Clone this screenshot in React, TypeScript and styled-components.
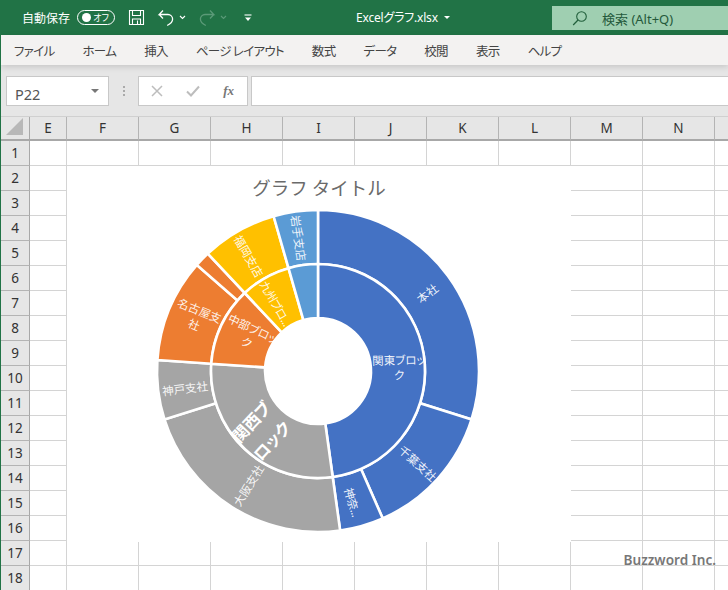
import React from "react";
import styled, { createGlobalStyle } from "styled-components";

const FONT = `"Noto Sans CJK JP", "Noto Sans", sans-serif`;
const UI_FONT = `"Noto Sans", "Noto Sans CJK JP", sans-serif`;

const GlobalStyle = createGlobalStyle`
  html, body {
    margin: 0;
    padding: 0;
    background: #fff;
    overflow: hidden;
  }
`;

const MENU = ["ファイル", "ホーム", "挿入", "ページ レイアウト", "数式", "データ", "校閲", "表示", "ヘルプ"];
const COLUMNS = ["E", "F", "G", "H", "I", "J", "K", "L", "M", "N", ""];
const ROWS = Array.from({ length: 18 }, (_, i) => i + 1);

const CX = 251;
const CY = 163;
const R_OUT = 161;
const R_MID = 107;
const R_IN = 53;

const BLUE = "#4472c4";
const ORANGE = "#ed7d31";
const GRAY = "#a5a5a5";
const YELLOW = "#ffc000";
const SKY = "#5b9bd5";

interface ISegment {
  from: number;
  to: number;
  color: string;
}

const OUTER: ISegment[] = [
  { from: 0, to: 107.5, color: BLUE },
  { from: 107.5, to: 156.3, color: BLUE },
  { from: 156.3, to: 172.1, color: BLUE },
  { from: 172.1, to: 252.5, color: GRAY },
  { from: 252.5, to: 273.9, color: GRAY },
  { from: 273.9, to: 311.2, color: ORANGE },
  { from: 311.2, to: 316.8, color: ORANGE },
  { from: 316.8, to: 344, color: YELLOW },
  { from: 344, to: 360, color: SKY },
];

const INNER: ISegment[] = [
  { from: 0, to: 172.1, color: BLUE },
  { from: 172.1, to: 273.9, color: GRAY },
  { from: 273.9, to: 316.8, color: ORANGE },
  { from: 316.8, to: 344, color: YELLOW },
  { from: 344, to: 360, color: SKY },
];

interface ILabel {
  lines: string[];
  x: number;
  y: number;
  rotate: number;
  large?: boolean;
  tight?: boolean;
}

// x, y are page coordinates of the label centre
const LABELS: ILabel[] = [
  { lines: ["本社"], x: 427, y: 293, rotate: -37 },
  { lines: ["千葉支社"], x: 418, y: 463, rotate: 42 },
  { lines: ["神奈..."], x: 353, y: 502, rotate: 74, tight: true },
  { lines: ["大阪支社"], x: 248, y: 485, rotate: -58 },
  { lines: ["神戸支社"], x: 185, y: 388, rotate: -7 },
  { lines: ["名古屋支", "社"], x: 197, y: 317, rotate: 22 },
  { lines: ["福岡支店"], x: 249, y: 256, rotate: 60 },
  { lines: ["岩手支店"], x: 299, y: 238, rotate: 82 },
  { lines: ["関東ブロッ", "ク"], x: 399, y: 367, rotate: -1 },
  { lines: ["関西ブ", "ロック"], x: 261, y: 431, rotate: -47, large: true },
  { lines: ["中部ブロッ", "ク"], x: 250, y: 335, rotate: 25 },
  { lines: ["九州ブロ..."], x: 276, y: 303, rotate: 60, tight: true },
];

const polar = (radius: number, angle: number) => {
  const rad = (angle * Math.PI) / 180;
  return [CX + radius * Math.sin(rad), CY - radius * Math.cos(rad)];
};

const arcPath = (r0: number, r1: number, from: number, to: number) => {
  const end = Math.min(to, from + 359.99);
  const large = end - from > 180 ? 1 : 0;
  const [ax, ay] = polar(r1, from);
  const [bx, by] = polar(r1, end);
  const [cx, cy] = polar(r0, end);
  const [dx, dy] = polar(r0, from);
  return `M${ax} ${ay}A${r1} ${r1} 0 ${large} 1 ${bx} ${by}L${cx} ${cy}A${r0} ${r0} 0 ${large} 0 ${dx} ${dy}Z`;
};

const Sunburst = () => (
  <ChartSvg viewBox="0 0 504 334">
    {OUTER.map((s) => (
      <Slice key={`o${s.from}`} d={arcPath(R_MID, R_OUT, s.from, s.to)} fill={s.color} />
    ))}
    {INNER.map((s) => (
      <Slice key={`i${s.from}`} d={arcPath(R_IN, R_MID, s.from, s.to)} fill={s.color} />
    ))}
    {LABELS.map((label) => {
      const lineHeight = label.large ? 28 : 15;
      const startY = (-(label.lines.length - 1) * lineHeight) / 2;
      return (
        <g
          key={label.lines[0]}
          transform={`translate(${label.x - 67} ${label.y - 208}) rotate(${label.rotate})`}
        >
          {label.lines.map((line, i) => (
            <SliceText
              key={line}
              $large={label.large}
              $tight={label.tight}
              x={0}
              y={startY + i * lineHeight}
            >
              {line}
            </SliceText>
          ))}
        </g>
      );
    })}
  </ChartSvg>
);

const App = () => (
  <>
    <GlobalStyle />
    <Page>
      <TitleBar>
        <AutoSave>自動保存</AutoSave>
        <Toggle>
          <ToggleKnob />
          <ToggleText>オフ</ToggleText>
        </Toggle>
        <QatIcon width="17" height="17" viewBox="0 0 17 17" $left={13}>
          <path d="M1.5 1.5h14v14h-14z M4.5 1.5v5h8v-5 M4.5 15.5v-5.5h8v5.5 M9.5 11.5v4" fill="none" stroke="#fff" strokeWidth="1.1" />
        </QatIcon>
        <QatIcon width="18" height="18" viewBox="0 0 18 18" $left={12}>
          <path d="M6 1.5L2.2 5.5H11a4.6 4.6 0 0 1 4.6 4.6c0 3-2.3 5-5.4 6.4 M2.2 5.5L6 9.5" fill="none" stroke="#fff" strokeWidth="1.3" />
        </QatIcon>
        <QatIcon width="7" height="5" viewBox="0 0 7 5" $left={4}>
          <path d="M1 1l2.5 2.5L6 1" fill="none" stroke="#fff" strokeWidth="1.1" />
        </QatIcon>
        <QatIcon width="18" height="18" viewBox="0 0 18 18" $left={12}>
          <path d="M12 1.5L15.8 5.5H7a4.6 4.6 0 0 0-4.6 4.6c0 3 2.3 5 5.4 6.4 M15.8 5.5L12 9.5" fill="none" stroke="#5b9a78" strokeWidth="1.3" />
        </QatIcon>
        <QatIcon width="7" height="5" viewBox="0 0 7 5" $left={4}>
          <path d="M1 1l2.5 2.5L6 1" fill="none" stroke="#5b9a78" strokeWidth="1.1" />
        </QatIcon>
        <QatIcon width="8" height="8" viewBox="0 0 8 8" $left={17}>
          <path d="M0.5 1h7" stroke="#fff" strokeWidth="1.1" />
          <path d="M1 3.5h6L4 7z" fill="#fff" />
        </QatIcon>
        <FileName>
          Excelグラフ.xlsx
          <FileCaret />
        </FileName>
        <SearchBox>
          <svg width="16" height="16" viewBox="0 0 16 16">
            <circle cx="9.5" cy="6.5" r="4.8" fill="none" stroke="#215f3b" strokeWidth="1.1" />
            <path d="M6 10L1.2 15" stroke="#215f3b" strokeWidth="1.2" />
          </svg>
          <SearchText>検索 (Alt+Q)</SearchText>
        </SearchBox>
      </TitleBar>
      <MenuBar>
        {MENU.map((item) => (
          <MenuItem key={item}>{item}</MenuItem>
        ))}
      </MenuBar>
      <FormulaArea>
        <NameBox>
          <NameText>P22</NameText>
          <NameCaret />
        </NameBox>
        <Grip>
          <i />
          <i />
          <i />
        </Grip>
        <FormulaButtons>
          <svg width="12" height="12" viewBox="0 0 12 12">
            <path d="M1 1l10 10M11 1L1 11" stroke="#bdbdbd" strokeWidth="1.5" />
          </svg>
          <svg width="14" height="12" viewBox="0 0 14 12">
            <path d="M1 6.5l4 4L13 1.5" fill="none" stroke="#bdbdbd" strokeWidth="2" />
          </svg>
          <FxText>fx</FxText>
        </FormulaButtons>
        <FormulaInput />
      </FormulaArea>
      <Sheet>
        <Corner>
          <svg width="18" height="18" viewBox="0 0 18 18">
            <path d="M17 0v17H0z" fill="#b8b8b8" />
          </svg>
        </Corner>
        {COLUMNS.map((col, i) => (
          <ColumnHead key={`c${i}`}>{col}</ColumnHead>
        ))}
        {ROWS.map((row) => (
          <React.Fragment key={row}>
            <RowHead>{row}</RowHead>
            {COLUMNS.map((_, i) => (
              <Cell key={i} />
            ))}
          </React.Fragment>
        ))}
        <ChartCard>
          <ChartTitle>グラフ タイトル</ChartTitle>
          <Sunburst />
        </ChartCard>
        <Watermark>Buzzword Inc.</Watermark>
      </Sheet>
    </Page>
  </>
);

export default App;

const Page = styled.div`
  width: 728px;
  height: 590px;
  overflow: hidden;
  box-sizing: border-box;
  border-left: 1px solid #217346;
  font-family: ${FONT};
  font-feature-settings: "palt";
`;

const TitleBar = styled.div`
  height: 35px;
  margin-left: -1px;
  padding-left: 22px;
  display: flex;
  align-items: center;
  background: #217346;
  color: #fff;
`;

const AutoSave = styled.span`
  font-size: 12px;
`;

const Toggle = styled.div`
  position: relative;
  width: 38px;
  height: 15px;
  margin-left: 7px;
  box-sizing: border-box;
  border: 1px solid #fff;
  border-radius: 8px;
`;

const ToggleKnob = styled.span`
  position: absolute;
  left: 4px;
  top: 2px;
  width: 9px;
  height: 9px;
  border-radius: 50%;
  background: #fff;
`;

const ToggleText = styled.span`
  position: absolute;
  right: 5px;
  top: 0;
  font-size: 9px;
  line-height: 13px;
`;

const QatIcon = styled.svg<{ $left: number }>`
  flex: none;
  margin-left: ${(p) => p.$left}px;
`;

const FileName = styled.div`
  position: absolute;
  left: 356px;
  top: 9px;
  display: flex;
  align-items: center;
  font-family: ${UI_FONT};
  font-size: 12px;
  line-height: 17px;
  letter-spacing: -0.2px;
`;

const FileCaret = styled.span`
  margin-left: 6px;
  border-left: 3px solid transparent;
  border-right: 3px solid transparent;
  border-top: 3px solid #fff;
`;

const SearchBox = styled.div`
  align-self: flex-start;
  margin-top: 6px;
  margin-left: auto;
  width: 176px;
  height: 24px;
  box-sizing: border-box;
  padding-left: 20px;
  display: flex;
  align-items: center;
  background: #9fcfb1;
`;

const SearchText = styled.span`
  margin-left: 14px;
  font-family: ${UI_FONT};
  font-size: 13px;
  color: #24593b;
`;

const MenuBar = styled.div`
  height: 30px;
  padding-left: 13px;
  display: flex;
  align-items: center;
  gap: 28px;
  background: #f3f2f1;
  box-shadow: 0 2px 6px rgba(0, 0, 0, 0.14);
  position: relative;
`;

const MenuItem = styled.span`
  font-size: 12.5px;
  letter-spacing: -0.7px;
  color: #444;
  white-space: nowrap;
`;

const FormulaArea = styled.div`
  height: 52px;
  box-sizing: border-box;
  padding: 11px 0 10px 5px;
  display: flex;
  background: #e6e6e6;
  border-bottom: 1px solid #d0d0d0;
`;

const NameBox = styled.div`
  width: 103px;
  box-sizing: border-box;
  padding: 0 9px 0 8px;
  display: flex;
  align-items: center;
  justify-content: space-between;
  background: #fff;
  border: 1px solid #c8c8c8;
`;

const NameText = styled.span`
  padding-top: 5px;
  font-family: ${UI_FONT};
  font-size: 14.5px;
  color: #555;
`;

const NameCaret = styled.span`
  border-left: 4px solid transparent;
  border-right: 4px solid transparent;
  border-top: 4px solid #777;
`;

const Grip = styled.div`
  width: 29px;
  display: flex;
  flex-direction: column;
  align-items: center;
  justify-content: center;
  gap: 2px;

  i {
    width: 2px;
    height: 2px;
    background: #aaa;
  }
`;

const FormulaButtons = styled.div`
  width: 110px;
  box-sizing: border-box;
  padding: 0 13px 0 12px;
  display: flex;
  align-items: center;
  justify-content: space-between;
  background: #fff;
  border: 1px solid #c8c8c8;
`;

const FxText = styled.span`
  font-family: "Liberation Serif", serif;
  font-style: italic;
  font-weight: 700;
  font-size: 13px;
  color: #777;
`;

const FormulaInput = styled.div`
  flex: 1;
  margin-left: 3px;
  background: #fff;
  border: 1px solid #c8c8c8;
  border-right: none;
`;

const Sheet = styled.div`
  position: relative;
  display: grid;
  grid-template-columns: 29px 37px repeat(9, 72px) 72px;
  grid-template-rows: 24px repeat(18, 25px);
`;

const Corner = styled.div`
  display: flex;
  align-items: flex-end;
  justify-content: center;
  padding-bottom: 3px;
  box-sizing: border-box;
  background: #e6e6e6;
  border-right: 1px solid #a8a8a8;
  border-bottom: 2px solid #a8a8a8;
`;

const ColumnHead = styled.div`
  display: flex;
  align-items: center;
  justify-content: center;
  box-sizing: border-box;
  background: #e6e6e6;
  border-right: 1px solid #b4b4b4;
  border-bottom: 2px solid #a8a8a8;
  font-family: ${UI_FONT};
  font-size: 13.5px;
  color: #333;
`;

const RowHead = styled.div`
  display: flex;
  align-items: center;
  justify-content: center;
  box-sizing: border-box;
  background: #e6e6e6;
  border-right: 1px solid #a8a8a8;
  border-bottom: 1px solid #b4b4b4;
  font-family: ${UI_FONT};
  font-size: 13.5px;
  color: #333;
`;

const Cell = styled.div`
  box-sizing: border-box;
  background: #fff;
  border-right: 1px solid #d4d4d4;
  border-bottom: 1px solid #d4d4d4;
`;

const ChartCard = styled.div`
  position: absolute;
  left: 66px;
  top: 49px;
  width: 504px;
  height: 376px;
  background: #fff;
`;

const ChartTitle = styled.div`
  height: 42px;
  display: flex;
  align-items: center;
  justify-content: center;
  font-size: 18.5px;
  font-feature-settings: normal;
  color: #6a6a6a;
`;

const ChartSvg = styled.svg`
  display: block;
  width: 504px;
  height: 334px;
`;

const Slice = styled.path`
  stroke: #fff;
  stroke-width: 2.6;
`;

const SliceText = styled.text<{ $large?: boolean; $tight?: boolean }>`
  font-family: ${FONT};
  font-size: ${(p) => (p.$large ? 16.5 : 11.5)}px;
  font-weight: ${(p) => (p.$large ? 700 : 400)};
  letter-spacing: ${(p) => (p.$tight ? -0.6 : 0)}px;
  fill: #fff;
  fill-opacity: ${(p) => (p.$large ? 1 : 0.92)};
  text-anchor: middle;
  dominant-baseline: central;
`;

const Watermark = styled.div`
  position: absolute;
  right: 12px;
  top: 433px;
  font-family: ${UI_FONT};
  font-size: 13.6px;
  font-weight: 600;
  color: #777;
`;
